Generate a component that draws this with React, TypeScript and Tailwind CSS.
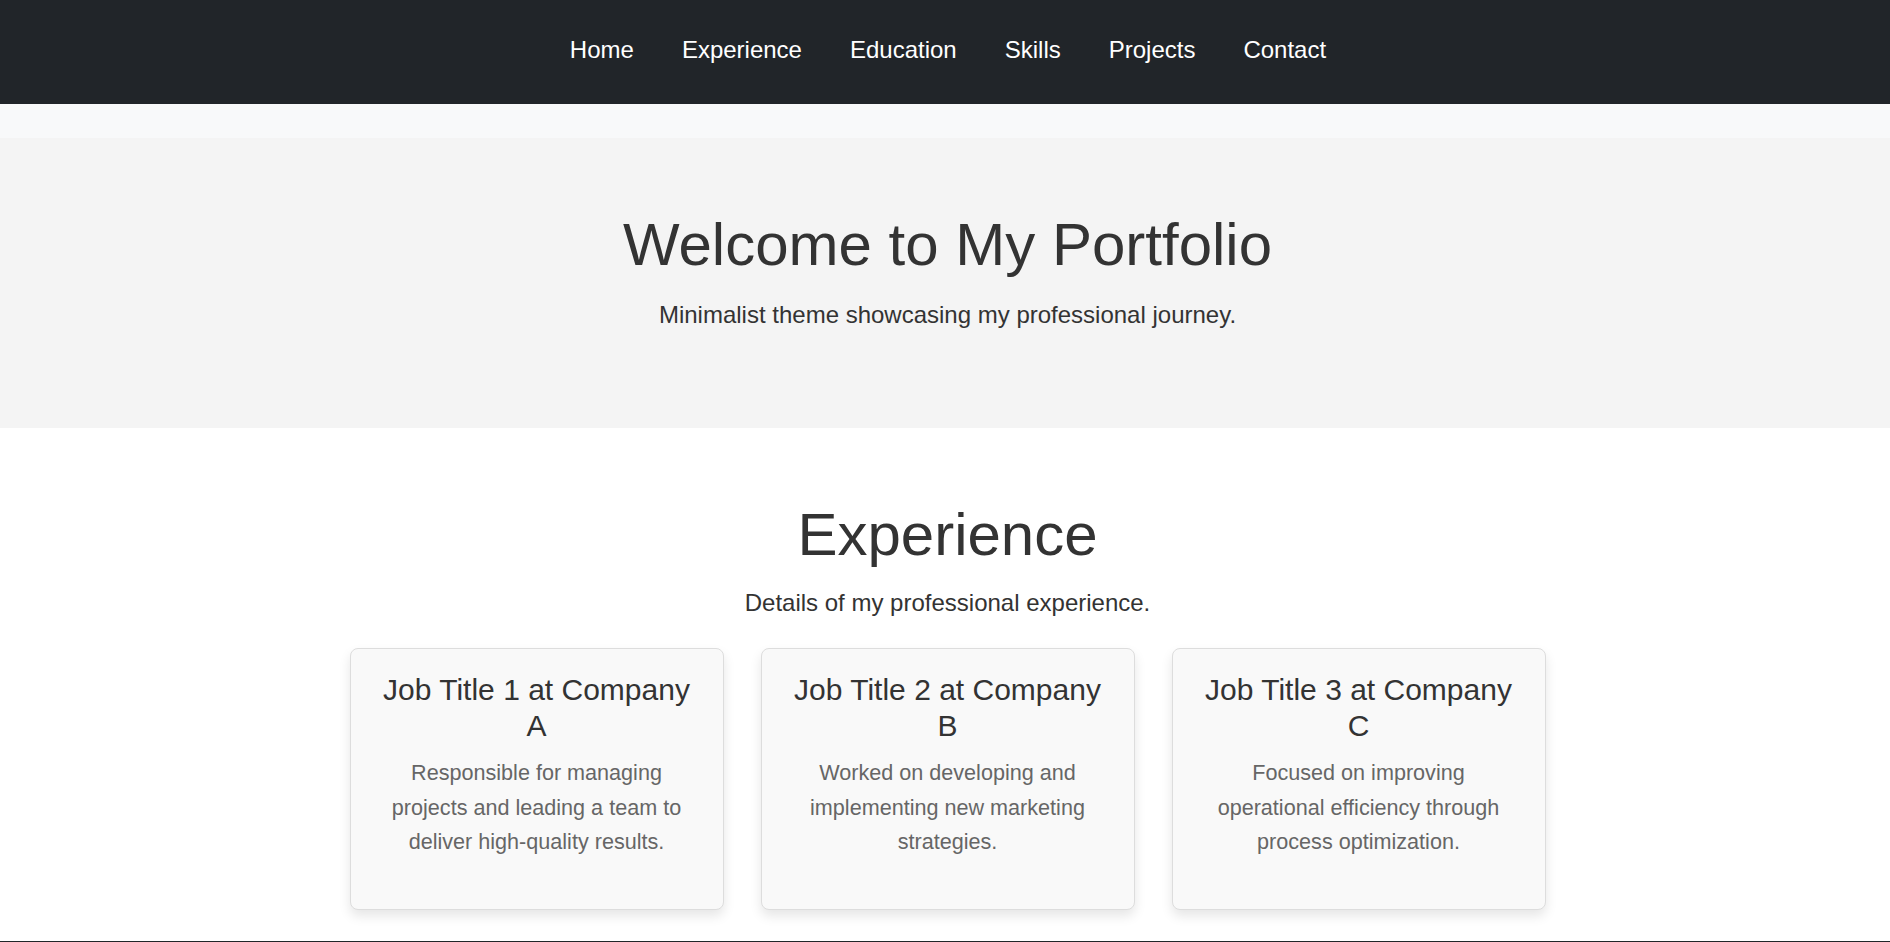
import React from 'react';

const navLinks = ['Home', 'Experience', 'Education', 'Skills', 'Projects', 'Contact'];

const jobs = [
  {
    title: 'Job Title 1 at Company A',
    description: 'Responsible for managing projects and leading a team to deliver high-quality results.'
  },
  {
    title: 'Job Title 2 at Company B',
    description: 'Worked on developing and implementing new marketing strategies.'
  },
  {
    title: 'Job Title 3 at Company C',
    description: 'Focused on improving operational efficiency through process optimization.'
  }
];

const App = () => {
  return (
    <div className="min-h-screen bg-white text-[#333] font-['Liberation_Sans',Arial,sans-serif]">
      {/* Top navigation */}
      <nav className="h-[104px] bg-[#212529] flex items-center justify-center pb-[5px]">
        <ul className="flex items-center gap-[48px] pl-[6px]">
          {navLinks.map((link) => (
            <li key={link}>
              <a href={`#${link.toLowerCase()}`} className="text-white text-[24px] leading-[36px]">
                {link}
              </a>
            </li>
          ))}
        </ul>
      </nav>

      <div className="h-[34px] bg-[#f8f9fa]"></div>

      {/* Hero */}
      <header className="bg-[#f4f4f4] text-center pt-[71px] pb-[95px] pl-[5px]">
        <h1 className="text-[60px] leading-[72px] text-[#333]">Welcome to My Portfolio</h1>
        <p className="mt-[16px] text-[24px] leading-[36px] text-[#333]">
          Minimalist theme showcasing my professional journey.
        </p>
      </header>

      {/* Experience */}
      <section id="experience" className="text-center pt-[71px] pb-[31px]">
        <div className="pl-[5px]">
          <h2 className="text-[60px] leading-[72px] text-[#333]">Experience</h2>
          <p className="mt-[14px] text-[24px] leading-[36px] text-[#333]">Details of my professional experience.</p>
        </div>

        <div className="mt-[27px] flex justify-center gap-[37px] pl-[5px]">
          {jobs.map((job) => (
            <div
              key={job.title}
              className="w-[374px] bg-[#f9f9f9] border border-[#dddddd] rounded-[8px] shadow-[0_6px_12px_rgba(0,0,0,0.1)] px-[28px] pt-[23px] pb-[49px]"
            >
              <h3 className="text-[30px] leading-[36px] text-[#333]">{job.title}</h3>
              <p className="mt-[12px] text-[21.6px] leading-[34.6px] text-[#666]">{job.description}</p>
            </div>
          ))}
        </div>
      </section>

      <footer className="h-[60px] bg-[#212529]"></footer>
    </div>
  );
};

export default App;
